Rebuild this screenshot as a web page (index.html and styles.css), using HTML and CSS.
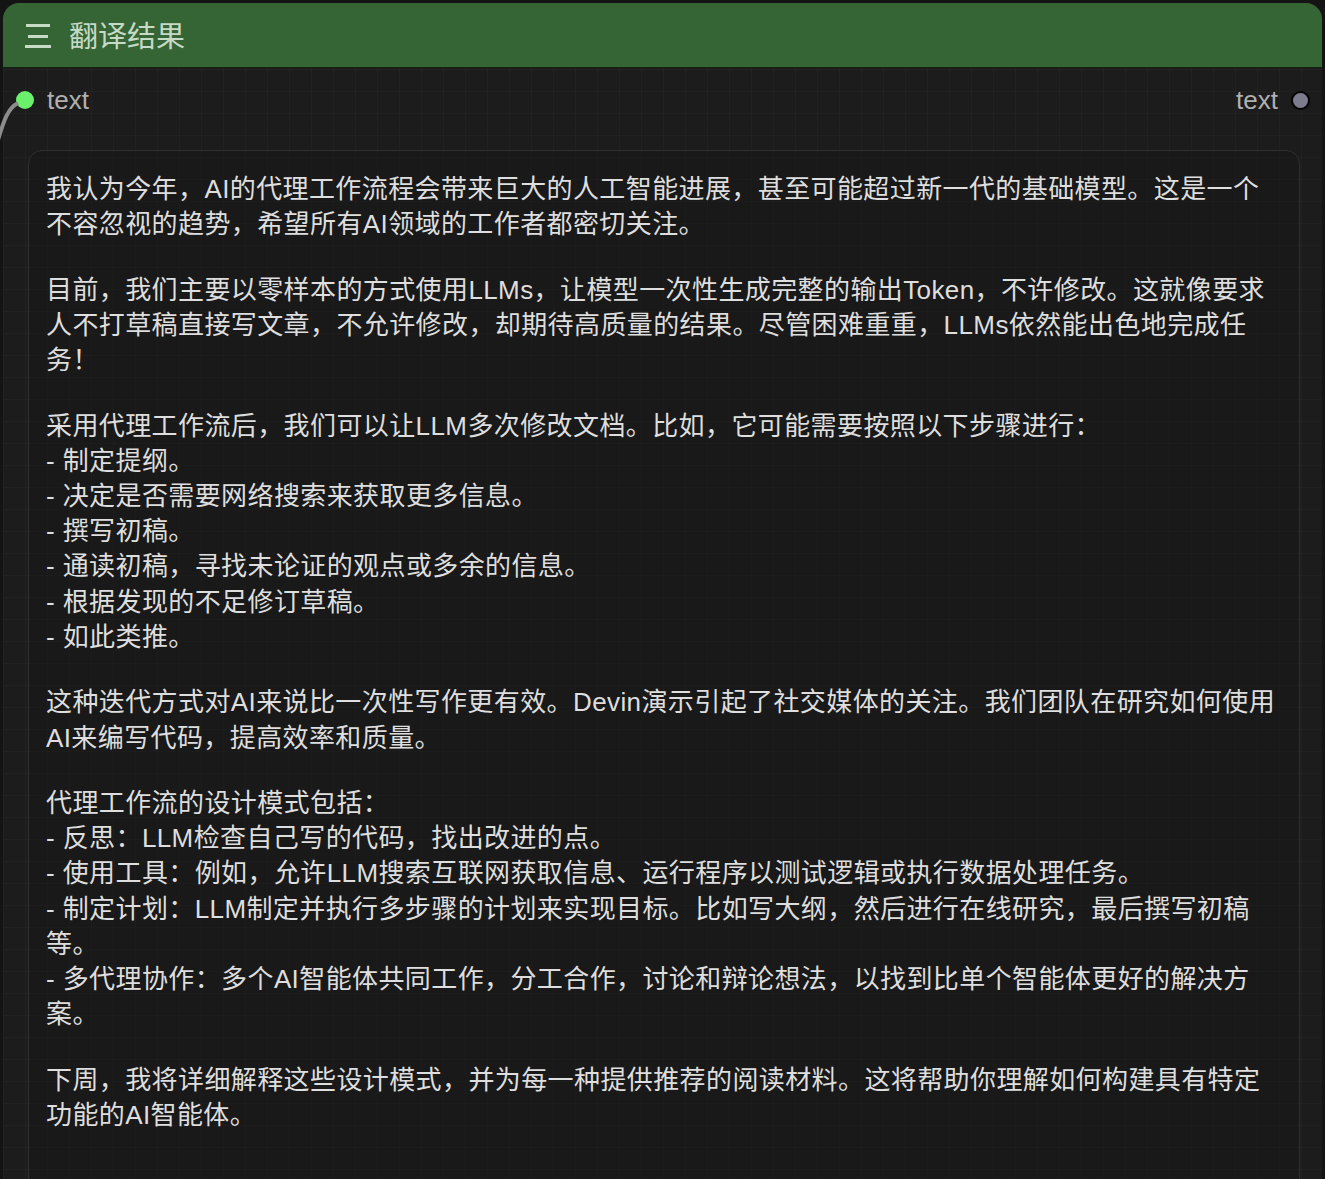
FILE: index.html
```html
<!DOCTYPE html>
<html lang="zh-cn">

<head>
  <meta charset="UTF-8">
  <meta name="viewport" content="width=device-width, initial-scale=1.0">
  <title> 翻译结果 </title>
  <link rel="stylesheet" href="styles.css">
</head>

<body>
  <svg class="wire" width="40" height="160" viewBox="0 0 40 160">
    <path d="M-2 140 C 4 120, 8 108, 18 103" fill="none" stroke="#8c8c8c" stroke-width="4" />
  </svg>
  <div class="node">
    <div class="node-head">
      <svg class="menu" width="28" height="28" viewBox="0 0 28 28">
        <rect x="2" y="3" width="24" height="3" />
        <rect x="4" y="14" width="20" height="3" />
        <rect x="1" y="24" width="26" height="3" />
      </svg>
      <span class="title">翻译结果</span>
    </div>
    <div class="slots">
      <div class="slot">
        <span class="dot dot-in"></span>
        <span>text</span>
      </div>
      <div class="slot">
        <span>text</span>
        <span class="dot dot-out"></span>
      </div>
    </div>
    <div class="text-box">
      <p>我认为今年，AI的代理工作流程会带来巨大的人工智能进展，甚至可能超过新一代的基础模型。这是一个<br>不容忽视的趋势，希望所有AI领域的工作者都密切关注。</p>
      <p>目前，我们主要以零样本的方式使用LLMs，让模型一次性生成完整的输出Token，不许修改。这就像要求<br>人不打草稿直接写文章，不允许修改，却期待高质量的结果。尽管困难重重，LLMs依然能出色地完成任<br>务！</p>
      <p>采用代理工作流后，我们可以让LLM多次修改文档。比如，它可能需要按照以下步骤进行：<br>- 制定提纲。<br>- 决定是否需要网络搜索来获取更多信息。<br>- 撰写初稿。<br>- 通读初稿，寻找未论证的观点或多余的信息。<br>- 根据发现的不足修订草稿。<br>- 如此类推。</p>
      <p>这种迭代方式对AI来说比一次性写作更有效。Devin演示引起了社交媒体的关注。我们团队在研究如何使用<br>AI来编写代码，提高效率和质量。</p>
      <p>代理工作流的设计模式包括：<br>- 反思：LLM检查自己写的代码，找出改进的点。<br>- 使用工具：例如，允许LLM搜索互联网获取信息、运行程序以测试逻辑或执行数据处理任务。<br>- 制定计划：LLM制定并执行多步骤的计划来实现目标。比如写大纲，然后进行在线研究，最后撰写初稿<br>等。<br>- 多代理协作：多个AI智能体共同工作，分工合作，讨论和辩论想法，以找到比单个智能体更好的解决方<br>案。</p>
      <p>下周，我将详细解释这些设计模式，并为每一种提供推荐的阅读材料。这将帮助你理解如何构建具有特定<br>功能的AI智能体。</p>
    </div>
  </div>
</body>

</html>
```

FILE: styles.css
```css
* {
  margin: 0;
  padding: 0;
  box-sizing: border-box;
}

html,
body {
  height: 100%;
  overflow: hidden;
}

body {
  position: relative;
  background-color: #141414;
  font-family: "Liberation Sans", "Noto Sans CJK SC", sans-serif;
}

.wire {
  position: absolute;
  left: 0;
  top: 0;
  z-index: 2;
}

.node {
  margin: 3px 0 0 3px;
  width: 1319px;
  height: 1300px;
  border-radius: 16px 16px 0 0;
  background-color: rgba(29, 29, 29, .96);
  background-image:
    linear-gradient(to right, rgba(255, 255, 255, .025) 1px, transparent 1px),
    linear-gradient(to bottom, rgba(255, 255, 255, .025) 1px, transparent 1px);
  background-size: 22px 22px;
}

.node-head {
  display: flex;
  align-items: center;
  gap: 17px;
  height: 65px;
  padding-left: 21px;
  background-color: #366535;
  border-radius: 16px 16px 0 0;
  border-bottom: 1px solid #142214;
}

.menu {
  fill: #c6dac6;
}

.title {
  font-size: 29px;
  color: #c6dac6;
  margin-top: -2px;
}

.slots {
  display: flex;
  justify-content: space-between;
  align-items: center;
  height: 64px;
  padding: 0 12px 0 13px;
  font-size: 26px;
  color: #b0b0b0;
}

.slot {
  display: flex;
  align-items: center;
  gap: 13px;
}

.dot {
  width: 18px;
  height: 18px;
  border-radius: 50%;
}

.dot-in {
  background-color: #6bf06b;
}

.dot-out {
  width: 19px;
  height: 19px;
  background-color: #7c7c8e;
  border: 2px solid #050505;
}

.text-box {
  margin: 18px 22px 0 25px;
  min-height: 1100px;
  padding: 21px 17px;
  border: 1px solid #2f2f2f;
  border-radius: 14px;
  background-color: rgba(20, 20, 20, .35);
  font-size: 26px;
  line-height: 35.2px;
  letter-spacing: .4px;
  color: #dedede;
  white-space: nowrap;
}

.text-box p+p {
  margin-top: 30.3px;
}
```
